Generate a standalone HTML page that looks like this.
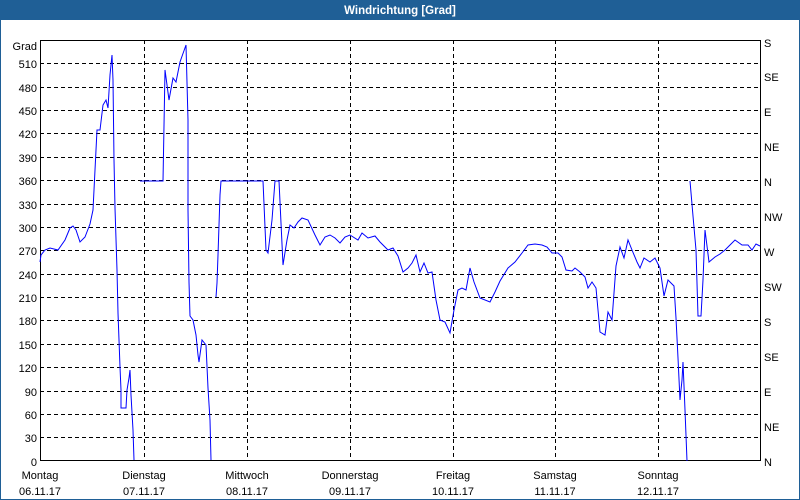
<!DOCTYPE html>
<html><head><meta charset="utf-8"><style>
html,body{margin:0;padding:0;width:800px;height:500px;overflow:hidden;background:#fff}
</style></head><body>
<svg width="800" height="500" xmlns="http://www.w3.org/2000/svg" font-family="Liberation Sans, sans-serif" font-size="11">
<rect x="0" y="0" width="800" height="500" fill="#fff"/>
<rect x="0.5" y="0.5" width="799" height="499" fill="none" stroke="#1f5f96"/>
<rect x="0" y="0" width="800" height="20" fill="#1f5f96"/>
<text x="400" y="14" text-anchor="middle" fill="#fff" font-weight="bold" font-size="11.5">Windrichtung [Grad]</text>
<g stroke="#000" stroke-dasharray="4,3" stroke-width="1">
<line x1="40" x2="760" y1="63.5" y2="63.5"/><line x1="40" x2="760" y1="87.5" y2="87.5"/><line x1="40" x2="760" y1="110.5" y2="110.5"/><line x1="40" x2="760" y1="133.5" y2="133.5"/><line x1="40" x2="760" y1="157.5" y2="157.5"/><line x1="40" x2="760" y1="180.5" y2="180.5"/><line x1="40" x2="760" y1="204.5" y2="204.5"/><line x1="40" x2="760" y1="227.5" y2="227.5"/><line x1="40" x2="760" y1="250.5" y2="250.5"/><line x1="40" x2="760" y1="274.5" y2="274.5"/><line x1="40" x2="760" y1="297.5" y2="297.5"/><line x1="40" x2="760" y1="320.5" y2="320.5"/><line x1="40" x2="760" y1="344.5" y2="344.5"/><line x1="40" x2="760" y1="367.5" y2="367.5"/><line x1="40" x2="760" y1="391.5" y2="391.5"/><line x1="40" x2="760" y1="414.5" y2="414.5"/><line x1="40" x2="760" y1="437.5" y2="437.5"/>
<line x1="144.5" x2="144.5" y1="40" y2="461"/><line x1="247.5" x2="247.5" y1="40" y2="461"/><line x1="350.5" x2="350.5" y1="40" y2="461"/><line x1="453.5" x2="453.5" y1="40" y2="461"/><line x1="555.5" x2="555.5" y1="40" y2="461"/><line x1="658.5" x2="658.5" y1="40" y2="461"/>
</g>
<rect x="40.5" y="40.5" width="720" height="420" fill="none" stroke="#000"/>
<g text-anchor="end" fill="#000">
<text x="37" y="50">Grad</text>
<text x="37" y="68">510</text><text x="37" y="92">480</text><text x="37" y="115">450</text><text x="37" y="138">420</text><text x="37" y="162">390</text><text x="37" y="185">360</text><text x="37" y="209">330</text><text x="37" y="232">300</text><text x="37" y="255">270</text><text x="37" y="279">240</text><text x="37" y="302">210</text><text x="37" y="325">180</text><text x="37" y="349">150</text><text x="37" y="372">120</text><text x="37" y="396">90</text><text x="37" y="419">60</text><text x="37" y="442">30</text><text x="37" y="466">0</text>
</g>
<g fill="#000">
<text x="764" y="47">S</text><text x="764" y="81">SE</text><text x="764" y="116">E</text><text x="764" y="151">NE</text><text x="764" y="186">N</text><text x="764" y="221">NW</text><text x="764" y="256">W</text><text x="764" y="291">SW</text><text x="764" y="326">S</text><text x="764" y="361">SE</text><text x="764" y="396">E</text><text x="764" y="431">NE</text><text x="764" y="466">N</text>
</g>
<g fill="#000" text-anchor="middle">
<text x="40" y="479">Montag</text><text x="40" y="495">06.11.17</text>
<text x="144" y="479">Dienstag</text><text x="144" y="495">07.11.17</text>
<text x="247" y="479">Mittwoch</text><text x="247" y="495">08.11.17</text>
<text x="350" y="479">Donnerstag</text><text x="350" y="495">09.11.17</text>
<text x="453" y="479">Freitag</text><text x="453" y="495">10.11.17</text>
<text x="555" y="479">Samstag</text><text x="555" y="495">11.11.17</text>
<text x="658" y="479">Sonntag</text><text x="658" y="495">12.11.17</text>
</g>
<g fill="none" stroke="#0000ff" stroke-width="1">
<polyline points="40,262 41,255 45,250 50,248 58,250 65,240 70,228 73,226 76,230 80,242 85,237 90,224 93,210 95,170 97,130 100,130 103,105 106,100 108,108 110,75 112,55 113,80 114,160 115,208 117,270 118,313 119,340 120,367 121,390 121,408 126,408 127,390 129,378 130,370 131,395 133,430 134,460"/>
<polyline points="140,181 160,181 163,181 165,70 169,100 173,78 176,82 180,62 186,45 188,120 188,210 189,282 190,316 193,320 196,335 198,355 199,362 202,340 206,345 208,388 210,420 211,460"/>
<polyline points="216,297 217,283 218,255 219,225 220,195 221,181 263,181 266,250 268,253 272,220 275,181 279,181 283,265 287,240 290,225 294,228 298,222 302,218 308,220 315,235 320,245 325,237 330,235 335,238 340,243 345,237 350,235 358,240 362,233 368,238 375,236 380,242 388,250 393,248 398,256 403,272 408,268 412,263 416,255 420,272 424,263 428,273 432,272 436,300 440,320 445,322 450,333 454,310 458,290 462,288 466,290 470,268 474,282 480,298 490,302 495,292 500,281 508,268 515,262 522,253 528,245 535,244 542,245 547,247 552,253 558,253 562,257 566,270 572,271 575,268 580,272 585,277 588,288 592,282 596,288 600,332 605,335 608,312 612,320 616,266 620,247 624,258 628,240 632,250 637,262 640,268 644,258 650,262 655,258 660,268 664,296 668,280 674,286 676,318 678,358 680,400 682,380 683,362 685,410 687,461"/>
<polyline points="690,181 693,216 696,250 698,316 701,316 703,280 705,230 709,262 715,257 720,254 725,250 730,245 735,240 742,245 748,245 752,250 756,244 760,246"/>
</g>
</svg>
</body></html>
